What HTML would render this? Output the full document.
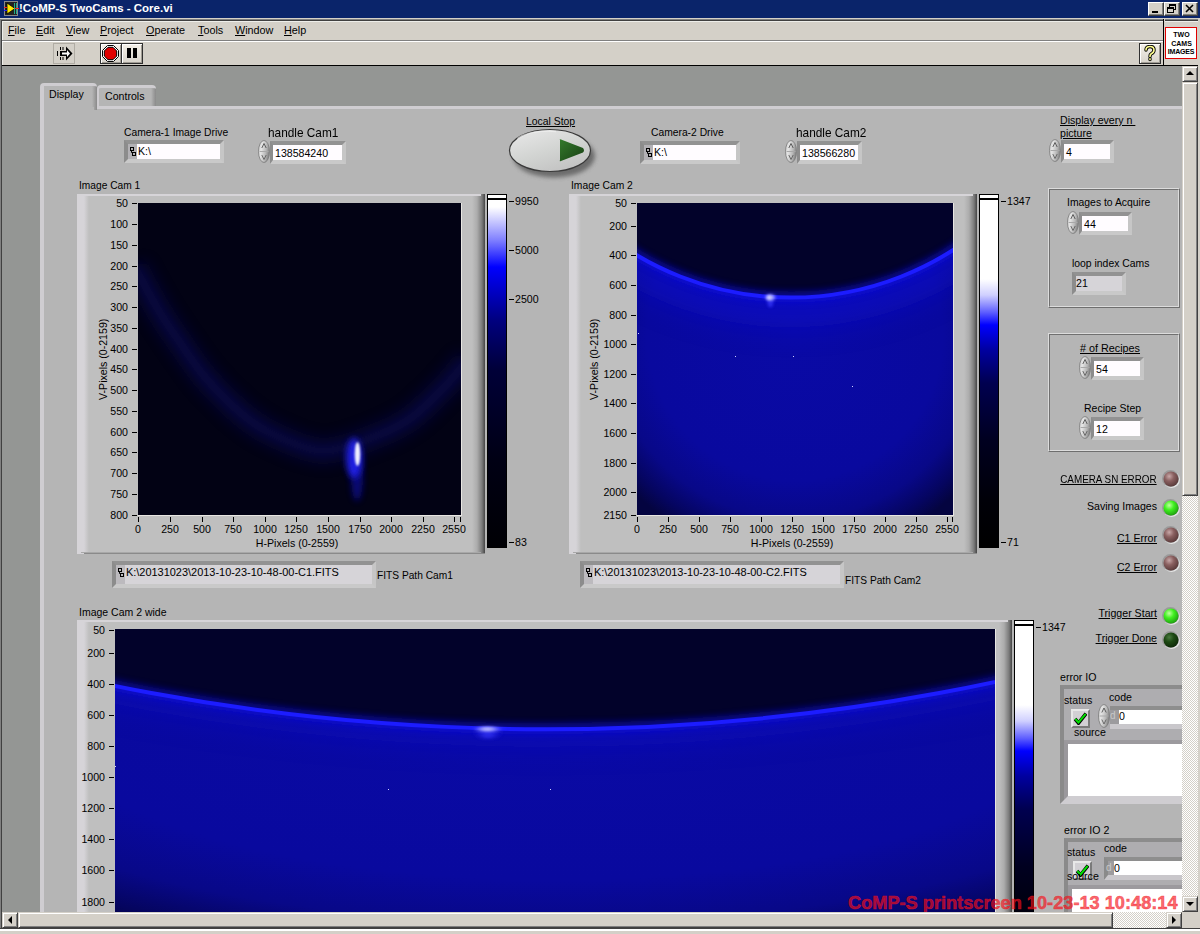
<!DOCTYPE html><html><head><meta charset="utf-8"><style>
*{box-sizing:border-box;margin:0;padding:0}
html,body{width:1200px;height:934px;overflow:hidden;background:#d4d0c8;font-family:"Liberation Sans",sans-serif;font-size:10.6px;color:#000}
.ab{position:absolute}
.t{position:absolute;white-space:pre;line-height:1;}
.u{text-decoration:underline;text-underline-offset:1px}

</style></head><body>
<div class="ab" style="left:0px;top:0px;width:1200px;height:18px;background:#0a246a"></div>
<svg class="ab" style="left:4px;top:1px" width="15" height="15" viewBox="0 0 15 15">
<rect x="0.5" y="0.5" width="13" height="14" fill="#222" stroke="#888"/>
<path d="M3 2 L3 13 L11 7.5 Z" fill="#ffe800" stroke="#000" stroke-width="0.8"/>
<rect x="10" y="2" width="1" height="11" fill="#2a8"/><rect x="12" y="2" width="1" height="11" fill="#2a8"/>
<rect x="0" y="6" width="3" height="1" fill="#e22"/><rect x="0" y="9" width="3" height="1" fill="#22e"/>
<rect x="11" y="7" width="4" height="1" fill="#e22"/>
</svg>
<div class="t" style="left:19px;top:3px;color:#fff;font-weight:bold;font-size:11.5px">!CoMP-S TwoCams - Core.vi</div>
<div class="ab" style="left:1148px;top:2px;width:16px;height:14px;background:#d4d0c8;border-top:1px solid #fff;border-left:1px solid #fff;border-right:1px solid #404040;border-bottom:1px solid #404040;box-shadow:inset -1px -1px 0 #808080"></div>
<div class="ab" style="left:1152px;top:11px;width:6px;height:2px;background:#000"></div>
<div class="ab" style="left:1164px;top:2px;width:16px;height:14px;background:#d4d0c8;border-top:1px solid #fff;border-left:1px solid #fff;border-right:1px solid #404040;border-bottom:1px solid #404040;box-shadow:inset -1px -1px 0 #808080"></div>
<svg class="ab" style="left:1167px;top:4px" width="10" height="10"><rect x="2.5" y="0.5" width="6" height="5" fill="none" stroke="#000"/><rect x="2" y="0" width="7" height="2" fill="#000"/><rect x="0.5" y="3.5" width="6" height="5" fill="#d4d0c8" stroke="#000"/><rect x="0" y="3" width="7" height="2" fill="#000"/></svg>
<div class="ab" style="left:1182px;top:2px;width:16px;height:14px;background:#d4d0c8;border-top:1px solid #fff;border-left:1px solid #fff;border-right:1px solid #404040;border-bottom:1px solid #404040;box-shadow:inset -1px -1px 0 #808080"></div>
<svg class="ab" style="left:1185px;top:4px" width="10" height="9"><path d="M1 1 L8 8 M8 1 L1 8" stroke="#000" stroke-width="1.6"/></svg>
<div class="ab" style="left:0px;top:18px;width:1200px;height:1px;background:#d4d0c8"></div>
<div class="ab" style="left:0px;top:19px;width:1200px;height:1px;background:#808080"></div>
<div class="ab" style="left:1px;top:20px;width:1199px;height:1px;background:#404040"></div>
<div class="ab" style="left:2px;top:21px;width:1198px;height:1px;background:#eeeeea"></div>
<div class="ab" style="left:0px;top:19px;width:1px;height:915px;background:#808080"></div>
<div class="ab" style="left:1px;top:20px;width:1px;height:914px;background:#404040"></div>
<div class="ab" style="left:2px;top:21px;width:1px;height:45px;background:#eeeeea"></div>
<div class="ab" style="left:1198px;top:18px;width:2px;height:916px;background:#d4d0c8"></div>
<div class="t" style="left:8px;top:25px;font-size:10.8px"><span style="text-decoration:underline;text-underline-offset:0.5px">F</span>ile</div>
<div class="t" style="left:36px;top:25px;font-size:10.8px"><span style="text-decoration:underline;text-underline-offset:0.5px">E</span>dit</div>
<div class="t" style="left:66px;top:25px;font-size:10.8px"><span style="text-decoration:underline;text-underline-offset:0.5px">V</span>iew</div>
<div class="t" style="left:100px;top:25px;font-size:10.8px"><span style="text-decoration:underline;text-underline-offset:0.5px">P</span>roject</div>
<div class="t" style="left:146px;top:25px;font-size:10.8px"><span style="text-decoration:underline;text-underline-offset:0.5px">O</span>perate</div>
<div class="t" style="left:198px;top:25px;font-size:10.8px"><span style="text-decoration:underline;text-underline-offset:0.5px">T</span>ools</div>
<div class="t" style="left:235px;top:25px;font-size:10.8px"><span style="text-decoration:underline;text-underline-offset:0.5px">W</span>indow</div>
<div class="t" style="left:284px;top:25px;font-size:10.8px"><span style="text-decoration:underline;text-underline-offset:0.5px">H</span>elp</div>
<div class="ab" style="left:2px;top:40px;width:1161px;height:1px;background:#808080"></div>
<div class="ab" style="left:2px;top:41px;width:1161px;height:1px;background:#fff"></div>
<div class="ab" style="left:53px;top:43px;width:22px;height:21px;border:1px solid #b0aca4"></div>
<svg class="ab" style="left:53px;top:43px" width="22" height="21" viewBox="0 0 22 21">
<path d="M4.5 8 V13 M7.5 4 V7 M7.5 14 V17 M10 4 V7 M10 14 V17" stroke="#000" stroke-width="1"/>
<path d="M7 8 H13 V3.5 L19.5 10.5 L13 17.5 V13 H7 Z" fill="#000"/>
<path d="M9 9.5 H14 V7 L17 10.5 L14 14 V11.5 H9 Z" fill="#fff"/>
</svg>
<div class="ab" style="left:100px;top:43px;width:22px;height:21px;background:linear-gradient(#f4f0e8,#d8d4cc);border:1px solid #303030;box-shadow:inset 1px 1px 0 #fff,inset -1px -1px 0 #a09c94"></div>
<div class="ab" style="left:121px;top:43px;width:22px;height:21px;background:linear-gradient(#f4f0e8,#d8d4cc);border:1px solid #303030;box-shadow:inset 1px 1px 0 #fff,inset -1px -1px 0 #a09c94"></div>
<svg class="ab" style="left:102px;top:45px" width="18" height="17" viewBox="0 0 18 17">
<path d="M5.5 0.5 h6 l5 5 v6 l-5 5 h-6 l-5 -5 v-6 z" fill="#fff" stroke="#000"/>
<path d="M6 2.3 h5 l3.7 3.7 v5 l-3.7 3.7 h-5 l-3.7 -3.7 v-5 z" fill="#e00000" stroke="#000" stroke-width="1"/>
</svg>
<div class="ab" style="left:127px;top:48px;width:4px;height:10px;background:#000"></div>
<div class="ab" style="left:133px;top:48px;width:4px;height:10px;background:#000"></div>
<div class="ab" style="left:1139px;top:43px;width:22px;height:21px;background:linear-gradient(#f4f0e8,#d8d4cc);border:1px solid #303030;box-shadow:inset 1px 1px 0 #fff,inset -1px -1px 0 #a09c94"></div>
<svg class="ab" style="left:1144px;top:45px" width="12" height="17" viewBox="0 0 12 17"><path d="M2 5 Q2 1.5 6 1.5 Q10 1.5 10 5 Q10 7.5 7 9 Q6 9.7 6 11.5 M6 13.8 V14.6" fill="none" stroke="#000" stroke-width="3.4" stroke-linecap="round"/><path d="M2 5 Q2 1.5 6 1.5 Q10 1.5 10 5 Q10 7.5 7 9 Q6 9.7 6 11.5 M6 13.8 V14.6" fill="none" stroke="#ffff90" stroke-width="1.6" stroke-linecap="round"/></svg>
<div class="ab" style="left:1163px;top:19px;width:1px;height:47px;background:#000"></div>
<div class="ab" style="left:1164px;top:19px;width:1px;height:47px;background:#d4d0c8"></div>
<div class="ab" style="left:1165px;top:27px;width:32px;height:32px;background:#fff;border:1px solid #e00000"></div>
<svg class="ab" style="left:1165px;top:27px" width="32" height="32"><g font-family="Liberation Sans" font-weight="bold" font-size="7" text-anchor="middle" fill="#000"><text x="16.5" y="10">TWO</text><text x="16.5" y="18.8">CAMS</text><text x="16" y="26.8" letter-spacing="-0.2">IMAGES</text></g></svg>
<div class="ab" style="left:2px;top:65px;width:1196px;height:1px;background:#000"></div>
<div class="ab" style="left:2px;top:66px;width:1180px;height:846px;background:#949694"></div>
<div class="ab" style="left:40px;top:106px;width:1142px;height:806px;background:#b5b5b5;border-top:3px solid #cfcdd1;border-left:4px solid #cfcdd1"></div>
<div class="ab" style="left:40px;top:83px;width:57px;height:27px;background:linear-gradient(90deg,#b5b5b5 calc(100% - 5px),#8a8a8a 100%);border-top:3px solid #cfcdd1;border-left:4px solid #cfcdd1;border-radius:4px 4px 0 0"></div>
<div class="ab" style="left:44px;top:107px;width:50px;height:4px;background:#b5b5b5"></div>
<div class="t" style="left:49px;top:89px;font-size:10.6px">Display</div>
<div class="ab" style="left:97px;top:85px;width:59px;height:21px;background:linear-gradient(90deg,#b5b5b5 calc(100% - 5px),#8a8a8a 100%);border-top:3px solid #cfcdd1;border-left:2px solid #cfcdd1;border-radius:4px 4px 0 0"></div>
<div class="t" style="left:105px;top:91px;font-size:10.6px">Controls</div>
<div class="t" style="left:79px;top:181px;font-size:10.2px">Image Cam 1</div>
<div class="ab" style="left:77px;top:194px;width:408px;height:360px;background:linear-gradient(90deg,#d6d4d8 0,#d6d4d8 7px,#bfbfbf 12px,#bfbfbf calc(100% - 13px),#acacac calc(100% - 8px),#7a7a7a calc(100% - 3px),#454545 100%)"></div>
<div class="ab" style="left:77px;top:194px;width:404px;height:2px;background:#d6d4d8"></div>
<div class="ab" style="left:84px;top:553px;width:401px;height:1px;background:#8a8a8a"></div>
<div class="ab" style="left:81px;top:552px;width:400px;height:1px;background:#a8a8a8"></div>
<div class="ab" style="left:132px;top:203px;width:5px;height:1px;background:#000"></div>
<div class="t" style="left:78px;top:198px;width:50px;text-align:right;font-size:10.6px">50</div>
<div class="ab" style="left:132px;top:224px;width:5px;height:1px;background:#000"></div>
<div class="t" style="left:78px;top:219px;width:50px;text-align:right;font-size:10.6px">100</div>
<div class="ab" style="left:132px;top:245px;width:5px;height:1px;background:#000"></div>
<div class="t" style="left:78px;top:240px;width:50px;text-align:right;font-size:10.6px">150</div>
<div class="ab" style="left:132px;top:266px;width:5px;height:1px;background:#000"></div>
<div class="t" style="left:78px;top:261px;width:50px;text-align:right;font-size:10.6px">200</div>
<div class="ab" style="left:132px;top:286px;width:5px;height:1px;background:#000"></div>
<div class="t" style="left:78px;top:281px;width:50px;text-align:right;font-size:10.6px">250</div>
<div class="ab" style="left:132px;top:307px;width:5px;height:1px;background:#000"></div>
<div class="t" style="left:78px;top:302px;width:50px;text-align:right;font-size:10.6px">300</div>
<div class="ab" style="left:132px;top:328px;width:5px;height:1px;background:#000"></div>
<div class="t" style="left:78px;top:323px;width:50px;text-align:right;font-size:10.6px">350</div>
<div class="ab" style="left:132px;top:349px;width:5px;height:1px;background:#000"></div>
<div class="t" style="left:78px;top:344px;width:50px;text-align:right;font-size:10.6px">400</div>
<div class="ab" style="left:132px;top:369px;width:5px;height:1px;background:#000"></div>
<div class="t" style="left:78px;top:364px;width:50px;text-align:right;font-size:10.6px">450</div>
<div class="ab" style="left:132px;top:390px;width:5px;height:1px;background:#000"></div>
<div class="t" style="left:78px;top:385px;width:50px;text-align:right;font-size:10.6px">500</div>
<div class="ab" style="left:132px;top:411px;width:5px;height:1px;background:#000"></div>
<div class="t" style="left:78px;top:406px;width:50px;text-align:right;font-size:10.6px">550</div>
<div class="ab" style="left:132px;top:432px;width:5px;height:1px;background:#000"></div>
<div class="t" style="left:78px;top:427px;width:50px;text-align:right;font-size:10.6px">600</div>
<div class="ab" style="left:132px;top:452px;width:5px;height:1px;background:#000"></div>
<div class="t" style="left:78px;top:447px;width:50px;text-align:right;font-size:10.6px">650</div>
<div class="ab" style="left:132px;top:473px;width:5px;height:1px;background:#000"></div>
<div class="t" style="left:78px;top:468px;width:50px;text-align:right;font-size:10.6px">700</div>
<div class="ab" style="left:132px;top:494px;width:5px;height:1px;background:#000"></div>
<div class="t" style="left:78px;top:489px;width:50px;text-align:right;font-size:10.6px">750</div>
<div class="ab" style="left:132px;top:515px;width:5px;height:1px;background:#000"></div>
<div class="t" style="left:78px;top:510px;width:50px;text-align:right;font-size:10.6px">800</div>
<div class="ab" style="left:138px;top:517px;width:1px;height:5px;background:#000"></div>
<div class="t" style="left:113px;top:524px;width:50px;text-align:center;font-size:10.6px">0</div>
<div class="ab" style="left:170px;top:517px;width:1px;height:5px;background:#000"></div>
<div class="t" style="left:145px;top:524px;width:50px;text-align:center;font-size:10.6px">250</div>
<div class="ab" style="left:202px;top:517px;width:1px;height:5px;background:#000"></div>
<div class="t" style="left:177px;top:524px;width:50px;text-align:center;font-size:10.6px">500</div>
<div class="ab" style="left:233px;top:517px;width:1px;height:5px;background:#000"></div>
<div class="t" style="left:208px;top:524px;width:50px;text-align:center;font-size:10.6px">750</div>
<div class="ab" style="left:265px;top:517px;width:1px;height:5px;background:#000"></div>
<div class="t" style="left:240px;top:524px;width:50px;text-align:center;font-size:10.6px">1000</div>
<div class="ab" style="left:296px;top:517px;width:1px;height:5px;background:#000"></div>
<div class="t" style="left:271px;top:524px;width:50px;text-align:center;font-size:10.6px">1250</div>
<div class="ab" style="left:328px;top:517px;width:1px;height:5px;background:#000"></div>
<div class="t" style="left:303px;top:524px;width:50px;text-align:center;font-size:10.6px">1500</div>
<div class="ab" style="left:360px;top:517px;width:1px;height:5px;background:#000"></div>
<div class="t" style="left:335px;top:524px;width:50px;text-align:center;font-size:10.6px">1750</div>
<div class="ab" style="left:391px;top:517px;width:1px;height:5px;background:#000"></div>
<div class="t" style="left:366px;top:524px;width:50px;text-align:center;font-size:10.6px">2000</div>
<div class="ab" style="left:423px;top:517px;width:1px;height:5px;background:#000"></div>
<div class="t" style="left:398px;top:524px;width:50px;text-align:center;font-size:10.6px">2250</div>
<div class="ab" style="left:454px;top:517px;width:1px;height:5px;background:#000"></div>
<div class="t" style="left:429px;top:524px;width:50px;text-align:center;font-size:10.6px">2550</div>
<div class="ab" style="left:460px;top:517px;width:1px;height:5px;background:#000"></div>
<div class="t" style="left:245px;top:538px;width:104px;text-align:center;font-size:10.6px">H-Pixels (0-2559)</div>
<div class="t" style="left:62px;top:354px;width:82px;text-align:center;font-size:10.6px;transform:rotate(-90deg)">V-Pixels (0-2159)</div>
<div class="ab" style="left:487px;top:194px;width:20px;height:354px;background:#000"></div>
<div class="ab" style="left:488px;top:195px;width:18px;height:3px;background:#fff"></div>
<div class="ab" style="left:488px;top:200px;width:18px;height:347px;background:linear-gradient(180deg,#fff 0,#fff 7px,#8080ff 40px,#0000ff 67px,#000080 120px,#000038 170px,#000014 260px,#000004 100%)"></div>
<div class="ab" style="left:509px;top:201px;width:5px;height:1px;background:#000"></div>
<div class="t" style="left:515px;top:196px;font-size:10.6px">9950</div>
<div class="ab" style="left:509px;top:250px;width:5px;height:1px;background:#000"></div>
<div class="t" style="left:515px;top:245px;font-size:10.6px">5000</div>
<div class="ab" style="left:509px;top:299px;width:5px;height:1px;background:#000"></div>
<div class="t" style="left:515px;top:294px;font-size:10.6px">2500</div>
<div class="ab" style="left:509px;top:542px;width:5px;height:1px;background:#000"></div>
<div class="t" style="left:515px;top:537px;font-size:10.6px">83</div>
<svg class="ab" style="left:138px;top:203px" width="323" height="312" viewBox="0 0 323 312">
<defs><filter id="b1" x="-50%" y="-50%" width="200%" height="200%"><feGaussianBlur stdDeviation="7"/></filter>
<filter id="b1b" x="-50%" y="-50%" width="200%" height="200%"><feGaussianBlur stdDeviation="4"/></filter>
<filter id="b2" x="-50%" y="-50%" width="200%" height="200%"><feGaussianBlur stdDeviation="3"/></filter>
<filter id="b3" x="-50%" y="-50%" width="200%" height="200%"><feGaussianBlur stdDeviation="1.2"/></filter></defs>
<rect width="323" height="312" fill="#020214"/>
<path d="M-3.0 62.0 C-2.5 63.3 -4.1 62.2 0.0 70.0 C4.1 77.8 14.3 96.9 21.4 108.7 C28.5 120.5 35.7 130.5 42.8 140.8 C49.9 151.2 57.1 161.9 64.2 170.8 C71.4 179.7 78.6 187.2 85.7 194.3 C92.8 201.4 99.9 208.0 107.0 213.6 C114.1 219.2 118.5 222.9 128.5 228.0 C138.5 233.1 155.7 241.2 166.8 244.4 C177.9 247.6 182.5 249.2 195.0 247.0 C207.5 244.8 228.7 236.9 241.8 231.5 C255.0 226.1 263.2 222.2 273.9 214.4 C284.6 206.6 297.8 192.6 306.0 184.4 C314.2 176.2 319.0 169.7 323.0 165.0 C327.0 160.3 328.8 157.5 330.0 156.0" fill="none" stroke="#0a0a68" stroke-width="26" opacity="0.36" filter="url(#b1)"/>
<path d="M-3.0 62.0 C-2.5 63.3 -4.1 62.2 0.0 70.0 C4.1 77.8 14.3 96.9 21.4 108.7 C28.5 120.5 35.7 130.5 42.8 140.8 C49.9 151.2 57.1 161.9 64.2 170.8 C71.4 179.7 78.6 187.2 85.7 194.3 C92.8 201.4 99.9 208.0 107.0 213.6 C114.1 219.2 118.5 222.9 128.5 228.0 C138.5 233.1 155.7 241.2 166.8 244.4 C177.9 247.6 182.5 249.2 195.0 247.0 C207.5 244.8 228.7 236.9 241.8 231.5 C255.0 226.1 263.2 222.2 273.9 214.4 C284.6 206.6 297.8 192.6 306.0 184.4 C314.2 176.2 319.0 169.7 323.0 165.0 C327.0 160.3 328.8 157.5 330.0 156.0" fill="none" stroke="#10106a" stroke-width="7" opacity="0.3" filter="url(#b1b)"/>
<ellipse cx="219" cy="272" rx="6" ry="26" fill="#0c0ca0" opacity="0.7" filter="url(#b2)"/>
<ellipse cx="216" cy="255" rx="8" ry="20" fill="#2222f0" opacity="0.9" filter="url(#b2)"/>
<ellipse cx="219.5" cy="251" rx="2.8" ry="12" fill="#f0f0ff" filter="url(#b3)"/>
</svg>
<div class="ab" style="left:461px;top:203px;width:1px;height:313px;background:#e8e6e2"></div>
<div class="ab" style="left:138px;top:515px;width:324px;height:1px;background:#e8e6e2"></div>
<div class="t" style="left:571px;top:181px;font-size:10.3px">Image Cam 2</div>
<div class="ab" style="left:569px;top:194px;width:408px;height:360px;background:linear-gradient(90deg,#d6d4d8 0,#d6d4d8 7px,#bfbfbf 12px,#bfbfbf calc(100% - 13px),#acacac calc(100% - 8px),#7a7a7a calc(100% - 3px),#454545 100%)"></div>
<div class="ab" style="left:569px;top:194px;width:404px;height:2px;background:#d6d4d8"></div>
<div class="ab" style="left:576px;top:553px;width:401px;height:1px;background:#8a8a8a"></div>
<div class="ab" style="left:573px;top:552px;width:400px;height:1px;background:#a8a8a8"></div>
<div class="ab" style="left:631px;top:203px;width:5px;height:1px;background:#000"></div>
<div class="t" style="left:577px;top:198px;width:50px;text-align:right;font-size:10.6px">50</div>
<div class="ab" style="left:631px;top:226px;width:5px;height:1px;background:#000"></div>
<div class="t" style="left:577px;top:221px;width:50px;text-align:right;font-size:10.6px">200</div>
<div class="ab" style="left:631px;top:255px;width:5px;height:1px;background:#000"></div>
<div class="t" style="left:577px;top:250px;width:50px;text-align:right;font-size:10.6px">400</div>
<div class="ab" style="left:631px;top:285px;width:5px;height:1px;background:#000"></div>
<div class="t" style="left:577px;top:280px;width:50px;text-align:right;font-size:10.6px">600</div>
<div class="ab" style="left:631px;top:315px;width:5px;height:1px;background:#000"></div>
<div class="t" style="left:577px;top:310px;width:50px;text-align:right;font-size:10.6px">800</div>
<div class="ab" style="left:631px;top:344px;width:5px;height:1px;background:#000"></div>
<div class="t" style="left:577px;top:339px;width:50px;text-align:right;font-size:10.6px">1000</div>
<div class="ab" style="left:631px;top:374px;width:5px;height:1px;background:#000"></div>
<div class="t" style="left:577px;top:369px;width:50px;text-align:right;font-size:10.6px">1200</div>
<div class="ab" style="left:631px;top:403px;width:5px;height:1px;background:#000"></div>
<div class="t" style="left:577px;top:398px;width:50px;text-align:right;font-size:10.6px">1400</div>
<div class="ab" style="left:631px;top:433px;width:5px;height:1px;background:#000"></div>
<div class="t" style="left:577px;top:428px;width:50px;text-align:right;font-size:10.6px">1600</div>
<div class="ab" style="left:631px;top:463px;width:5px;height:1px;background:#000"></div>
<div class="t" style="left:577px;top:458px;width:50px;text-align:right;font-size:10.6px">1800</div>
<div class="ab" style="left:631px;top:492px;width:5px;height:1px;background:#000"></div>
<div class="t" style="left:577px;top:487px;width:50px;text-align:right;font-size:10.6px">2000</div>
<div class="ab" style="left:631px;top:515px;width:5px;height:1px;background:#000"></div>
<div class="t" style="left:577px;top:510px;width:50px;text-align:right;font-size:10.6px">2150</div>
<div class="ab" style="left:637px;top:517px;width:1px;height:5px;background:#000"></div>
<div class="t" style="left:612px;top:524px;width:50px;text-align:center;font-size:10.6px">0</div>
<div class="ab" style="left:668px;top:517px;width:1px;height:5px;background:#000"></div>
<div class="t" style="left:643px;top:524px;width:50px;text-align:center;font-size:10.6px">250</div>
<div class="ab" style="left:699px;top:517px;width:1px;height:5px;background:#000"></div>
<div class="t" style="left:674px;top:524px;width:50px;text-align:center;font-size:10.6px">500</div>
<div class="ab" style="left:730px;top:517px;width:1px;height:5px;background:#000"></div>
<div class="t" style="left:705px;top:524px;width:50px;text-align:center;font-size:10.6px">750</div>
<div class="ab" style="left:761px;top:517px;width:1px;height:5px;background:#000"></div>
<div class="t" style="left:736px;top:524px;width:50px;text-align:center;font-size:10.6px">1000</div>
<div class="ab" style="left:792px;top:517px;width:1px;height:5px;background:#000"></div>
<div class="t" style="left:767px;top:524px;width:50px;text-align:center;font-size:10.6px">1250</div>
<div class="ab" style="left:823px;top:517px;width:1px;height:5px;background:#000"></div>
<div class="t" style="left:798px;top:524px;width:50px;text-align:center;font-size:10.6px">1500</div>
<div class="ab" style="left:854px;top:517px;width:1px;height:5px;background:#000"></div>
<div class="t" style="left:829px;top:524px;width:50px;text-align:center;font-size:10.6px">1750</div>
<div class="ab" style="left:885px;top:517px;width:1px;height:5px;background:#000"></div>
<div class="t" style="left:860px;top:524px;width:50px;text-align:center;font-size:10.6px">2000</div>
<div class="ab" style="left:916px;top:517px;width:1px;height:5px;background:#000"></div>
<div class="t" style="left:891px;top:524px;width:50px;text-align:center;font-size:10.6px">2250</div>
<div class="ab" style="left:947px;top:517px;width:1px;height:5px;background:#000"></div>
<div class="t" style="left:922px;top:524px;width:50px;text-align:center;font-size:10.6px">2550</div>
<div class="ab" style="left:952px;top:517px;width:1px;height:5px;background:#000"></div>
<div class="t" style="left:740px;top:538px;width:104px;text-align:center;font-size:10.6px">H-Pixels (0-2559)</div>
<div class="t" style="left:553px;top:354px;width:82px;text-align:center;font-size:10.6px;transform:rotate(-90deg)">V-Pixels (0-2159)</div>
<div class="ab" style="left:979px;top:194px;width:20px;height:354px;background:#000"></div>
<div class="ab" style="left:980px;top:195px;width:18px;height:3px;background:#fff"></div>
<div class="ab" style="left:980px;top:200px;width:18px;height:347px;background:linear-gradient(180deg,#fff 0,#fff 79px,#d0d0ff 95px,#6060ff 112px,#0000ff 125px,#0000a0 150px,#000050 183px,#000020 240px,#000008 300px,#000000 100%)"></div>
<div class="ab" style="left:1001px;top:201px;width:5px;height:1px;background:#000"></div>
<div class="t" style="left:1007px;top:196px;font-size:10.6px">1347</div>
<div class="ab" style="left:1001px;top:542px;width:5px;height:1px;background:#000"></div>
<div class="t" style="left:1007px;top:537px;font-size:10.6px">71</div>
<svg class="ab" style="left:637px;top:203px" width="316" height="312" viewBox="0 0 316 312">
<defs>
<radialGradient id="vgp2" cx="0.5" cy="0.42" r="0.72">
<stop offset="0" stop-color="#0a0aa6"/><stop offset="0.65" stop-color="#09099e"/><stop offset="0.82" stop-color="#080888"/><stop offset="0.93" stop-color="#050560"/><stop offset="1" stop-color="#040440"/></radialGradient>
<clipPath id="cbp2"><path d="M0 0 H316 V312 H0 Z M-146.3 -206 A300.1 300.1 0 1 0 453.90000000000003 -206 A300.1 300.1 0 1 0 -146.3 -206 Z" clip-rule="evenodd"/></clipPath>
<filter id="gp2" x="-20%" y="-20%" width="140%" height="140%"><feGaussianBlur stdDeviation="3.0 3"/></filter>
<filter id="g2p2" x="-20%" y="-50%" width="140%" height="200%"><feGaussianBlur stdDeviation="14.0 14"/></filter>
<filter id="sp2" x="-100%" y="-100%" width="300%" height="300%"><feGaussianBlur stdDeviation="1.6 1.6"/></filter>
</defs>
<rect width="316" height="312" fill="#02022a"/>
<g clip-path="url(#cbp2)"><rect width="316" height="312" fill="url(#vgp2)"/>
<circle cx="153.8" cy="-206" r="300.1" fill="none" stroke="#0e0ed4" stroke-width="60" opacity="0.5" filter="url(#g2p2)"/></g>
<circle cx="153.8" cy="-206" r="300.1" fill="none" stroke="#0c0ce0" stroke-width="11" opacity="0.55" filter="url(#gp2)"/>
<circle cx="153.8" cy="-206" r="300.6" fill="none" stroke="#1c1cff" stroke-width="4"/>
<ellipse cx="133.4" cy="98.4" rx="3.0" ry="6" fill="#3a3aff" opacity="0.7" filter="url(#sp2)"/>
<ellipse cx="133.4" cy="94.4" rx="5.0" ry="3.0" fill="#9090ff" filter="url(#sp2)"/>
<ellipse cx="132.4" cy="94.4" rx="2.5" ry="2.0" fill="#e0e0ff" filter="url(#sp2)"/>
<rect x="98" y="153" width="1" height="1" fill="#d0d0ff"/><rect x="156" y="153" width="1" height="1" fill="#d0d0ff"/><rect x="215" y="183" width="1" height="1" fill="#d0d0ff"/><rect x="1" y="130" width="1" height="1" fill="#d0d0ff"/></svg>
<div class="ab" style="left:953px;top:203px;width:1px;height:313px;background:#e8e6e2"></div>
<div class="ab" style="left:637px;top:515px;width:317px;height:1px;background:#e8e6e2"></div>
<div class="t" style="left:79px;top:607px;font-size:10.5px">Image Cam 2 wide</div>
<div class="ab" style="left:77px;top:620px;width:935px;height:381px;background:linear-gradient(90deg,#d6d4d8 0,#d6d4d8 7px,#bfbfbf 12px,#bfbfbf calc(100% - 13px),#acacac calc(100% - 8px),#7a7a7a calc(100% - 3px),#454545 100%)"></div>
<div class="ab" style="left:77px;top:620px;width:931px;height:2px;background:#d6d4d8"></div>
<div class="ab" style="left:84px;top:1000px;width:928px;height:1px;background:#8a8a8a"></div>
<div class="ab" style="left:81px;top:999px;width:927px;height:1px;background:#a8a8a8"></div>
<div class="ab" style="left:109px;top:630px;width:5px;height:1px;background:#000"></div>
<div class="t" style="left:55px;top:625px;width:50px;text-align:right;font-size:10.6px">50</div>
<div class="ab" style="left:109px;top:653px;width:5px;height:1px;background:#000"></div>
<div class="t" style="left:55px;top:648px;width:50px;text-align:right;font-size:10.6px">200</div>
<div class="ab" style="left:109px;top:684px;width:5px;height:1px;background:#000"></div>
<div class="t" style="left:55px;top:679px;width:50px;text-align:right;font-size:10.6px">400</div>
<div class="ab" style="left:109px;top:715px;width:5px;height:1px;background:#000"></div>
<div class="t" style="left:55px;top:710px;width:50px;text-align:right;font-size:10.6px">600</div>
<div class="ab" style="left:109px;top:746px;width:5px;height:1px;background:#000"></div>
<div class="t" style="left:55px;top:741px;width:50px;text-align:right;font-size:10.6px">800</div>
<div class="ab" style="left:109px;top:777px;width:5px;height:1px;background:#000"></div>
<div class="t" style="left:55px;top:772px;width:50px;text-align:right;font-size:10.6px">1000</div>
<div class="ab" style="left:109px;top:808px;width:5px;height:1px;background:#000"></div>
<div class="t" style="left:55px;top:803px;width:50px;text-align:right;font-size:10.6px">1200</div>
<div class="ab" style="left:109px;top:839px;width:5px;height:1px;background:#000"></div>
<div class="t" style="left:55px;top:834px;width:50px;text-align:right;font-size:10.6px">1400</div>
<div class="ab" style="left:109px;top:870px;width:5px;height:1px;background:#000"></div>
<div class="t" style="left:55px;top:865px;width:50px;text-align:right;font-size:10.6px">1600</div>
<div class="ab" style="left:109px;top:902px;width:5px;height:1px;background:#000"></div>
<div class="t" style="left:55px;top:897px;width:50px;text-align:right;font-size:10.6px">1800</div>
<div class="ab" style="left:1014px;top:620px;width:20px;height:381px;background:#000"></div>
<div class="ab" style="left:1015px;top:621px;width:18px;height:3px;background:#fff"></div>
<div class="ab" style="left:1015px;top:626px;width:18px;height:374px;background:linear-gradient(180deg,#fff 0,#fff 79px,#d0d0ff 95px,#6060ff 112px,#0000ff 125px,#0000a0 150px,#000050 183px,#000020 240px,#000008 300px,#000000 100%)"></div>
<div class="ab" style="left:1036px;top:627px;width:5px;height:1px;background:#000"></div>
<div class="t" style="left:1042px;top:622px;font-size:10.6px">1347</div>
<svg class="ab" style="left:115px;top:629px" width="880" height="283" viewBox="0 0 880 283">
<defs>
<radialGradient id="vgw" cx="0.5" cy="0.3" r="0.9">
<stop offset="0" stop-color="#0a0aa6"/><stop offset="0.65" stop-color="#09099e"/><stop offset="0.82" stop-color="#080888"/><stop offset="0.93" stop-color="#050560"/><stop offset="1" stop-color="#040440"/></radialGradient>
<clipPath id="cbw"><path d="M0 0 H880 V283 H0 Z M-1734.7 -2065.3 A2165 2165 0 1 0 2595.3 -2065.3 A2165 2165 0 1 0 -1734.7 -2065.3 Z" clip-rule="evenodd"/></clipPath>
<filter id="gw" x="-20%" y="-20%" width="140%" height="140%"><feGaussianBlur stdDeviation="8.100000000000001 3"/></filter>
<filter id="g2w" x="-20%" y="-50%" width="140%" height="200%"><feGaussianBlur stdDeviation="37.800000000000004 14"/></filter>
<filter id="sw" x="-100%" y="-100%" width="300%" height="300%"><feGaussianBlur stdDeviation="4.32 1.6"/></filter>
</defs>
<rect width="880" height="283" fill="#02022a"/>
<g clip-path="url(#cbw)"><rect width="880" height="283" fill="url(#vgw)"/>
<circle cx="430.3" cy="-2065.3" r="2165" fill="none" stroke="#0e0ed4" stroke-width="36" opacity="0.4" filter="url(#g2w)"/></g>
<circle cx="430.3" cy="-2065.3" r="2165" fill="none" stroke="#0c0ce0" stroke-width="11" opacity="0.55" filter="url(#gw)"/>
<circle cx="430.3" cy="-2065.3" r="2165.5" fill="none" stroke="#1c1cff" stroke-width="4"/>
<ellipse cx="373" cy="104" rx="8.100000000000001" ry="6" fill="#3a3aff" opacity="0.7" filter="url(#sw)"/>
<ellipse cx="373" cy="100" rx="10.125" ry="2.25" fill="#9090ff" filter="url(#sw)"/>
<ellipse cx="372" cy="100" rx="5.0625" ry="1.5" fill="#e0e0ff" filter="url(#sw)"/>
<rect x="273" y="160" width="1" height="1" fill="#d0d0ff"/><rect x="435" y="160" width="1" height="1" fill="#d0d0ff"/><rect x="0" y="137" width="1" height="1" fill="#d0d0ff"/></svg>
<div class="ab" style="left:995px;top:629px;width:1px;height:300px;background:#e8e6e2"></div>
<div class="t" style="left:124px;top:128px;font-size:10.3px">Camera-1 Image Drive</div>
<div class="ab" style="left:124px;top:140px;width:100px;height:23px;background:#b3b1b5;border-style:solid;border-width:4px 4px 4px 4px;border-color:#929292 #c6c6c6 #c9c9c9 #8c8c8c"></div>
<div class="ab" style="left:137px;top:144px;width:83px;height:15px;background:#fffcff"></div>
<div class="ab" style="left:129px;top:146px"><svg width="8" height="11" viewBox="0 0 8 11"><rect x="1.5" y="1.5" width="3" height="3" fill="none" stroke="#000" stroke-width="1"/><rect x="3.5" y="6.5" width="3" height="3" fill="none" stroke="#000" stroke-width="1"/><path d="M2.5 4.5 V6.5 H3.5" stroke="#000" stroke-width="1" fill="none"/></svg></div>
<div class="t" style="left:138px;top:146px;font-size:10.6px">K:\</div>
<div class="t" style="left:268px;top:125.5px;font-size:13.3px;transform:scaleX(0.89);transform-origin:0 0">handle Cam1</div>
<svg class="ab" style="left:258px;top:140px" width="12" height="23" viewBox="0 0 12 23">
<defs><linearGradient id="sp258_140" x1="0" y1="0" x2="1" y2="0.3"><stop offset="0" stop-color="#d0d0d0"/><stop offset="0.35" stop-color="#e4e4e4"/><stop offset="0.75" stop-color="#b8b8b8"/><stop offset="1" stop-color="#8a8a8a"/></linearGradient></defs>
<ellipse cx="6.0" cy="11.5" rx="5.5" ry="11.0" fill="url(#sp258_140)" stroke="#7a7a7a" stroke-width="0.8"/>
<path d="M1.5 11.5 H10.5" stroke="#a8a8a8"/>
<path d="M3.8 8.0 L6.0 3.5 L8.2 8.0" fill="none" stroke="#505050" stroke-width="0.9"/>
<path d="M3.8 15.0 L6.0 19.5 L8.2 15.0" fill="none" stroke="#606060" stroke-width="0.9"/>
</svg>
<div class="ab" style="left:270px;top:141px;width:76px;height:23px;background:#fffcff;border-style:solid;border-width:4px 4px 4px 3px;border-color:#929292 #c6c6c6 #c9c9c9 #8c8c8c"></div>
<div class="t" style="left:275px;top:148px;font-size:10.6px">138584240</div>
<div class="t" style="left:651px;top:128px;font-size:10.3px">Camera-2 Drive</div>
<div class="ab" style="left:640px;top:141px;width:100px;height:23px;background:#b3b1b5;border-style:solid;border-width:4px 4px 4px 4px;border-color:#929292 #c6c6c6 #c9c9c9 #8c8c8c"></div>
<div class="ab" style="left:653px;top:145px;width:83px;height:15px;background:#fffcff"></div>
<div class="ab" style="left:645px;top:147px"><svg width="8" height="11" viewBox="0 0 8 11"><rect x="1.5" y="1.5" width="3" height="3" fill="none" stroke="#000" stroke-width="1"/><rect x="3.5" y="6.5" width="3" height="3" fill="none" stroke="#000" stroke-width="1"/><path d="M2.5 4.5 V6.5 H3.5" stroke="#000" stroke-width="1" fill="none"/></svg></div>
<div class="t" style="left:654px;top:147px;font-size:10.6px">K:\</div>
<div class="t" style="left:796px;top:125.5px;font-size:13.3px;transform:scaleX(0.89);transform-origin:0 0">handle Cam2</div>
<svg class="ab" style="left:785px;top:140px" width="12" height="23" viewBox="0 0 12 23">
<defs><linearGradient id="sp785_140" x1="0" y1="0" x2="1" y2="0.3"><stop offset="0" stop-color="#d0d0d0"/><stop offset="0.35" stop-color="#e4e4e4"/><stop offset="0.75" stop-color="#b8b8b8"/><stop offset="1" stop-color="#8a8a8a"/></linearGradient></defs>
<ellipse cx="6.0" cy="11.5" rx="5.5" ry="11.0" fill="url(#sp785_140)" stroke="#7a7a7a" stroke-width="0.8"/>
<path d="M1.5 11.5 H10.5" stroke="#a8a8a8"/>
<path d="M3.8 8.0 L6.0 3.5 L8.2 8.0" fill="none" stroke="#505050" stroke-width="0.9"/>
<path d="M3.8 15.0 L6.0 19.5 L8.2 15.0" fill="none" stroke="#606060" stroke-width="0.9"/>
</svg>
<div class="ab" style="left:797px;top:141px;width:65px;height:23px;background:#fffcff;border-style:solid;border-width:4px 4px 4px 3px;border-color:#929292 #c6c6c6 #c9c9c9 #8c8c8c"></div>
<div class="t" style="left:802px;top:148px;font-size:10.6px">138566280</div>
<div class="t" style="left:1060px;top:115px;font-size:10.6px"><span class="u">Display every n </span></div>
<div class="t" style="left:1060px;top:128px;font-size:10.6px"><span class="u">picture</span></div>
<svg class="ab" style="left:1049px;top:139px" width="12" height="23" viewBox="0 0 12 23">
<defs><linearGradient id="sp1049_139" x1="0" y1="0" x2="1" y2="0.3"><stop offset="0" stop-color="#d0d0d0"/><stop offset="0.35" stop-color="#e4e4e4"/><stop offset="0.75" stop-color="#b8b8b8"/><stop offset="1" stop-color="#8a8a8a"/></linearGradient></defs>
<ellipse cx="6.0" cy="11.5" rx="5.5" ry="11.0" fill="url(#sp1049_139)" stroke="#7a7a7a" stroke-width="0.8"/>
<path d="M1.5 11.5 H10.5" stroke="#a8a8a8"/>
<path d="M3.8 8.0 L6.0 3.5 L8.2 8.0" fill="none" stroke="#505050" stroke-width="0.9"/>
<path d="M3.8 15.0 L6.0 19.5 L8.2 15.0" fill="none" stroke="#606060" stroke-width="0.9"/>
</svg>
<div class="ab" style="left:1061px;top:140px;width:53px;height:23px;background:#fffcff;border-style:solid;border-width:4px 4px 4px 3px;border-color:#929292 #c6c6c6 #c9c9c9 #8c8c8c"></div>
<div class="t" style="left:1066px;top:147px;font-size:10.6px">4</div>
<div class="t" style="left:526px;top:117px;font-size:10.4px"><span class="u">Local Stop</span></div>
<svg class="ab" style="left:504px;top:126px" width="96" height="56" viewBox="0 0 96 56">
<defs>
<filter id="lsb" x="-30%" y="-30%" width="160%" height="160%"><feGaussianBlur stdDeviation="2.2"/></filter>
<linearGradient id="lsg" x1="0.2" y1="0" x2="0.8" y2="1"><stop offset="0" stop-color="#e6e6e6"/><stop offset="0.5" stop-color="#d2d4d2"/><stop offset="1" stop-color="#c0c0c0"/></linearGradient>
<linearGradient id="tri" x1="0" y1="0" x2="1" y2="1"><stop offset="0" stop-color="#347a2c"/><stop offset="1" stop-color="#184014"/></linearGradient>
</defs>
<ellipse cx="50" cy="30" rx="41" ry="21.5" fill="#5a5a5a" opacity="0.8" filter="url(#lsb)"/>
<ellipse cx="46" cy="24.5" rx="40.5" ry="21" fill="url(#lsg)" stroke="#3a3a3a" stroke-width="1.2"/><ellipse cx="44" cy="21" rx="36" ry="16" fill="none" stroke="#f4f4f4" stroke-width="1.5" opacity="0.6" stroke-dasharray="40 200" stroke-dashoffset="-95"/>
<path d="M56 14 Q55 13 57 13.5 L79 22 Q81 24.5 79 26.5 L57 35 Q55 36 56 34 Z" fill="url(#tri)"/>
</svg>
<div class="ab" style="left:1048px;top:188px;width:132px;height:120px;border:1px solid #dcdcdc;border-right-color:#6e6e6e;border-bottom-color:#6e6e6e"></div>
<div class="ab" style="left:1049px;top:189px;width:130px;height:118px;border:1px solid #707070;border-right-color:#dcdcdc;border-bottom-color:#dcdcdc"></div>
<div class="t" style="left:1067px;top:198px;font-size:10.4px">Images to Acquire</div>
<svg class="ab" style="left:1067px;top:211px" width="12" height="23" viewBox="0 0 12 23">
<defs><linearGradient id="sp1067_211" x1="0" y1="0" x2="1" y2="0.3"><stop offset="0" stop-color="#d0d0d0"/><stop offset="0.35" stop-color="#e4e4e4"/><stop offset="0.75" stop-color="#b8b8b8"/><stop offset="1" stop-color="#8a8a8a"/></linearGradient></defs>
<ellipse cx="6.0" cy="11.5" rx="5.5" ry="11.0" fill="url(#sp1067_211)" stroke="#7a7a7a" stroke-width="0.8"/>
<path d="M1.5 11.5 H10.5" stroke="#a8a8a8"/>
<path d="M3.8 8.0 L6.0 3.5 L8.2 8.0" fill="none" stroke="#505050" stroke-width="0.9"/>
<path d="M3.8 15.0 L6.0 19.5 L8.2 15.0" fill="none" stroke="#606060" stroke-width="0.9"/>
</svg>
<div class="ab" style="left:1079px;top:212px;width:53px;height:23px;background:#fffcff;border-style:solid;border-width:4px 4px 4px 3px;border-color:#929292 #c6c6c6 #c9c9c9 #8c8c8c"></div>
<div class="t" style="left:1084px;top:219px;font-size:10.6px">44</div>
<div class="t" style="left:1072px;top:259px;font-size:10.4px">loop index Cams</div>
<div class="ab" style="left:1072px;top:272px;width:54px;height:23px;background:#d6d4d8;border-style:solid;border-width:4px 4px 4px 4px;border-color:#929292 #c6c6c6 #c9c9c9 #8c8c8c"></div>
<div class="t" style="left:1076px;top:278px;font-size:10.6px">21</div>
<div class="ab" style="left:1048px;top:333px;width:132px;height:119px;border:1px solid #dcdcdc;border-right-color:#6e6e6e;border-bottom-color:#6e6e6e"></div>
<div class="ab" style="left:1049px;top:334px;width:130px;height:117px;border:1px solid #707070;border-right-color:#dcdcdc;border-bottom-color:#dcdcdc"></div>
<div class="t" style="left:1080px;top:343px;font-size:10.8px"><span class="u"># of Recipes</span></div>
<svg class="ab" style="left:1079px;top:356px" width="12" height="23" viewBox="0 0 12 23">
<defs><linearGradient id="sp1079_356" x1="0" y1="0" x2="1" y2="0.3"><stop offset="0" stop-color="#d0d0d0"/><stop offset="0.35" stop-color="#e4e4e4"/><stop offset="0.75" stop-color="#b8b8b8"/><stop offset="1" stop-color="#8a8a8a"/></linearGradient></defs>
<ellipse cx="6.0" cy="11.5" rx="5.5" ry="11.0" fill="url(#sp1079_356)" stroke="#7a7a7a" stroke-width="0.8"/>
<path d="M1.5 11.5 H10.5" stroke="#a8a8a8"/>
<path d="M3.8 8.0 L6.0 3.5 L8.2 8.0" fill="none" stroke="#505050" stroke-width="0.9"/>
<path d="M3.8 15.0 L6.0 19.5 L8.2 15.0" fill="none" stroke="#606060" stroke-width="0.9"/>
</svg>
<div class="ab" style="left:1091px;top:357px;width:53px;height:23px;background:#fffcff;border-style:solid;border-width:4px 4px 4px 3px;border-color:#929292 #c6c6c6 #c9c9c9 #8c8c8c"></div>
<div class="t" style="left:1096px;top:364px;font-size:10.6px">54</div>
<div class="t" style="left:1084px;top:403px;font-size:10.5px">Recipe Step</div>
<svg class="ab" style="left:1079px;top:416px" width="12" height="23" viewBox="0 0 12 23">
<defs><linearGradient id="sp1079_416" x1="0" y1="0" x2="1" y2="0.3"><stop offset="0" stop-color="#d0d0d0"/><stop offset="0.35" stop-color="#e4e4e4"/><stop offset="0.75" stop-color="#b8b8b8"/><stop offset="1" stop-color="#8a8a8a"/></linearGradient></defs>
<ellipse cx="6.0" cy="11.5" rx="5.5" ry="11.0" fill="url(#sp1079_416)" stroke="#7a7a7a" stroke-width="0.8"/>
<path d="M1.5 11.5 H10.5" stroke="#a8a8a8"/>
<path d="M3.8 8.0 L6.0 3.5 L8.2 8.0" fill="none" stroke="#505050" stroke-width="0.9"/>
<path d="M3.8 15.0 L6.0 19.5 L8.2 15.0" fill="none" stroke="#606060" stroke-width="0.9"/>
</svg>
<div class="ab" style="left:1091px;top:417px;width:53px;height:23px;background:#fffcff;border-style:solid;border-width:4px 4px 4px 3px;border-color:#929292 #c6c6c6 #c9c9c9 #8c8c8c"></div>
<div class="t" style="left:1096px;top:424px;font-size:10.6px">12</div>
<svg class="ab" style="left:1161px;top:469px" width="20" height="20" viewBox="0 0 20 20">
<defs><radialGradient id="led1171479" cx="0.38" cy="0.32" r="0.7"><stop offset="0" stop-color="#c8a8a8"/><stop offset="0.45" stop-color="#8a6060"/><stop offset="1" stop-color="#5a3a3a"/></radialGradient></defs>
<circle cx="10.5" cy="10.5" r="8.5" fill="#e6e6e6"/>
<circle cx="9.5" cy="9.5" r="8.5" fill="#9a9a9a"/>
<circle cx="10" cy="10" r="7.5" fill="url(#led1171479)"/>
</svg>
<div class="t" style="left:958px;top:474px;width:199px;text-align:right;font-size:10.6px"><span style="display:inline-block;transform:scaleX(0.93);transform-origin:100% 50%"><span class="u">CAMERA SN ERROR</span></span></div>
<svg class="ab" style="left:1161px;top:498px" width="20" height="20" viewBox="0 0 20 20">
<defs><radialGradient id="led1171508" cx="0.38" cy="0.32" r="0.7"><stop offset="0" stop-color="#c0ffa0"/><stop offset="0.45" stop-color="#40f020"/><stop offset="1" stop-color="#20a010"/></radialGradient></defs>
<circle cx="10.5" cy="10.5" r="8.5" fill="#e6e6e6"/>
<circle cx="9.5" cy="9.5" r="8.5" fill="#9a9a9a"/>
<circle cx="10" cy="10" r="7.5" fill="url(#led1171508)"/>
</svg>
<div class="t" style="left:958px;top:501px;width:199px;text-align:right;font-size:10.6px">Saving Images</div>
<svg class="ab" style="left:1161px;top:525px" width="20" height="20" viewBox="0 0 20 20">
<defs><radialGradient id="led1171535" cx="0.38" cy="0.32" r="0.7"><stop offset="0" stop-color="#c8a8a8"/><stop offset="0.45" stop-color="#8a6060"/><stop offset="1" stop-color="#5a3a3a"/></radialGradient></defs>
<circle cx="10.5" cy="10.5" r="8.5" fill="#e6e6e6"/>
<circle cx="9.5" cy="9.5" r="8.5" fill="#9a9a9a"/>
<circle cx="10" cy="10" r="7.5" fill="url(#led1171535)"/>
</svg>
<div class="t" style="left:958px;top:533px;width:199px;text-align:right;font-size:10.6px"><span class="u">C1 Error</span></div>
<svg class="ab" style="left:1161px;top:553px" width="20" height="20" viewBox="0 0 20 20">
<defs><radialGradient id="led1171563" cx="0.38" cy="0.32" r="0.7"><stop offset="0" stop-color="#c8a8a8"/><stop offset="0.45" stop-color="#8a6060"/><stop offset="1" stop-color="#5a3a3a"/></radialGradient></defs>
<circle cx="10.5" cy="10.5" r="8.5" fill="#e6e6e6"/>
<circle cx="9.5" cy="9.5" r="8.5" fill="#9a9a9a"/>
<circle cx="10" cy="10" r="7.5" fill="url(#led1171563)"/>
</svg>
<div class="t" style="left:958px;top:562px;width:199px;text-align:right;font-size:10.6px"><span class="u">C2 Error</span></div>
<svg class="ab" style="left:1161px;top:606px" width="20" height="20" viewBox="0 0 20 20">
<defs><radialGradient id="led1171616" cx="0.38" cy="0.32" r="0.7"><stop offset="0" stop-color="#c0ffa0"/><stop offset="0.45" stop-color="#40f020"/><stop offset="1" stop-color="#20a010"/></radialGradient></defs>
<circle cx="10.5" cy="10.5" r="8.5" fill="#e6e6e6"/>
<circle cx="9.5" cy="9.5" r="8.5" fill="#9a9a9a"/>
<circle cx="10" cy="10" r="7.5" fill="url(#led1171616)"/>
</svg>
<div class="t" style="left:958px;top:608px;width:199px;text-align:right;font-size:10.6px"><span class="u">Trigger Start</span></div>
<svg class="ab" style="left:1161px;top:630px" width="20" height="20" viewBox="0 0 20 20">
<defs><radialGradient id="led1171640" cx="0.38" cy="0.32" r="0.7"><stop offset="0" stop-color="#4a7a40"/><stop offset="0.45" stop-color="#1e4a14"/><stop offset="1" stop-color="#0e2a08"/></radialGradient></defs>
<circle cx="10.5" cy="10.5" r="8.5" fill="#e6e6e6"/>
<circle cx="9.5" cy="9.5" r="8.5" fill="#9a9a9a"/>
<circle cx="10" cy="10" r="7.5" fill="url(#led1171640)"/>
</svg>
<div class="t" style="left:958px;top:633px;width:199px;text-align:right;font-size:10.6px"><span class="u">Trigger Done</span></div>
<div class="ab" style="left:112px;top:561px;width:264px;height:27px;background:#bcbabe;border-style:solid;border-width:4px 4px 4px 4px;border-color:#929292 #c6c6c6 #c9c9c9 #8c8c8c"></div>
<div class="ab" style="left:125px;top:565px;width:247px;height:19px;background:#d6d4d8"></div>
<div class="ab" style="left:117px;top:567px"><svg width="8" height="11" viewBox="0 0 8 11"><rect x="1.5" y="1.5" width="3" height="3" fill="none" stroke="#000" stroke-width="1"/><rect x="3.5" y="6.5" width="3" height="3" fill="none" stroke="#000" stroke-width="1"/><path d="M2.5 4.5 V6.5 H3.5" stroke="#000" stroke-width="1" fill="none"/></svg></div>
<div class="t" style="left:126px;top:567px;font-size:10.95px">K:\20131023\2013-10-23-10-48-00-C1.FITS</div>
<div class="t" style="left:377px;top:571px;font-size:10.2px">FITS Path Cam1</div>
<div class="ab" style="left:580px;top:561px;width:264px;height:27px;background:#bcbabe;border-style:solid;border-width:4px 4px 4px 4px;border-color:#929292 #c6c6c6 #c9c9c9 #8c8c8c"></div>
<div class="ab" style="left:593px;top:565px;width:247px;height:19px;background:#d6d4d8"></div>
<div class="ab" style="left:585px;top:567px"><svg width="8" height="11" viewBox="0 0 8 11"><rect x="1.5" y="1.5" width="3" height="3" fill="none" stroke="#000" stroke-width="1"/><rect x="3.5" y="6.5" width="3" height="3" fill="none" stroke="#000" stroke-width="1"/><path d="M2.5 4.5 V6.5 H3.5" stroke="#000" stroke-width="1" fill="none"/></svg></div>
<div class="t" style="left:594px;top:567px;font-size:10.95px">K:\20131023\2013-10-23-10-48-00-C2.FITS</div>
<div class="t" style="left:845px;top:576px;font-size:10.2px">FITS Path Cam2</div>
<div class="t" style="left:1060px;top:672px;font-size:10.6px">error IO</div>
<div class="ab" style="left:1060px;top:685px;width:122px;height:119px;background:#aeadb0;border-style:solid;border-width:4px 0 4px 4px;border-color:#8c8c8c #8c8c8c #cfcdd1 #8a8a8a"></div>
<div class="t" style="left:1064px;top:695px;font-size:10.6px">status</div>
<div class="t" style="left:1109px;top:692px;font-size:10.6px">code</div>
<div class="ab" style="left:1071px;top:709px;width:19px;height:19px;background:#d2d0d4;border:2px solid;border-color:#e8e8e8 #7a7a7a #7a7a7a #e8e8e8"></div>
<svg class="ab" style="left:1074px;top:712px" width="13" height="13" viewBox="0 0 13 13"><path d="M1 7 L4.5 11 L12 1.5" fill="none" stroke="#000" stroke-width="3.6"/><path d="M1.3 7 L4.5 10.5 L11.7 1.8" fill="none" stroke="#00e000" stroke-width="2"/></svg>
<svg class="ab" style="left:1098px;top:704px" width="12" height="24" viewBox="0 0 12 24">
<defs><linearGradient id="sp1098_704" x1="0" y1="0" x2="1" y2="0.3"><stop offset="0" stop-color="#d0d0d0"/><stop offset="0.35" stop-color="#e4e4e4"/><stop offset="0.75" stop-color="#b8b8b8"/><stop offset="1" stop-color="#8a8a8a"/></linearGradient></defs>
<ellipse cx="6.0" cy="12.0" rx="5.5" ry="11.5" fill="url(#sp1098_704)" stroke="#7a7a7a" stroke-width="0.8"/>
<path d="M1.5 12.0 H10.5" stroke="#a8a8a8"/>
<path d="M3.8 8.5 L6.0 4.0 L8.2 8.5" fill="none" stroke="#505050" stroke-width="0.9"/>
<path d="M3.8 15.5 L6.0 20.0 L8.2 15.5" fill="none" stroke="#606060" stroke-width="0.9"/>
</svg>
<div class="ab" style="left:1110px;top:706px;width:72px;height:23px;background:#9c9b9e;border-style:solid;border-width:4px 0px 5px 0px;border-color:#8e8e8e #c8c8c8 #c9c7cb #8a8a8a"></div>
<div class="ab" style="left:1119px;top:710px;width:63px;height:14px;background:#fff"></div>
<div class="t" style="left:1110px;top:711px;font-size:10px;color:#c8c8c8">d</div>
<div class="t" style="left:1119px;top:711px;font-size:10.6px">0</div>
<div class="t" style="left:1074px;top:727px;font-size:10.6px">source</div>
<div class="ab" style="left:1064px;top:740px;width:118px;height:60px;background:#fff;border-style:solid;border-width:4px 0px 4px 4px;border-color:#9c9a9e #c8c8c8 #cfcdd1 #9a989c"></div>
<div class="t" style="left:1064px;top:825px;font-size:10.6px">error IO 2</div>
<div class="ab" style="left:1064px;top:838px;width:118px;height:122px;background:#aeadb0;border-style:solid;border-width:4px 0 4px 4px;border-color:#8c8c8c #8c8c8c #cfcdd1 #8a8a8a"></div>
<div class="t" style="left:1067px;top:847px;font-size:10.6px">status</div>
<div class="t" style="left:1104px;top:843px;font-size:10.6px">code</div>
<div class="ab" style="left:1073px;top:861px;width:19px;height:19px;background:#d2d0d4;border:2px solid;border-color:#e8e8e8 #7a7a7a #7a7a7a #e8e8e8"></div>
<svg class="ab" style="left:1076px;top:864px" width="13" height="13" viewBox="0 0 13 13"><path d="M1 7 L4.5 11 L12 1.5" fill="none" stroke="#000" stroke-width="3.6"/><path d="M1.3 7 L4.5 10.5 L11.7 1.8" fill="none" stroke="#00e000" stroke-width="2"/></svg>
<div class="ab" style="left:1104px;top:857px;width:78px;height:23px;background:#9c9b9e;border-style:solid;border-width:4px 0px 5px 4px;border-color:#8e8e8e #c8c8c8 #c9c7cb #8a8a8a"></div>
<div class="ab" style="left:1114px;top:861px;width:68px;height:14px;background:#fff"></div>
<div class="t" style="left:1106px;top:863px;font-size:10px;color:#c8c8c8">d</div>
<div class="t" style="left:1114px;top:863px;font-size:10.6px">0</div>
<div class="t" style="left:1067px;top:871px;font-size:10.6px">source</div>
<div class="ab" style="left:1068px;top:885px;width:114px;height:75px;background:#fff;border-style:solid;border-width:4px 0px 0px 4px;border-color:#9c9a9e #c8c8c8 #cfcdd1 #9a989c"></div>
<div class="t" style="left:848px;top:894px;font-size:18.2px;font-weight:bold;color:rgba(245,15,25,0.63);-webkit-text-stroke:0.6px rgba(245,15,25,0.63);paint-order:stroke fill">CoMP-S printscreen 10-23-13 10:48:14</div>
<div class="ab" style="left:1182px;top:66px;width:16px;height:846px;background-color:#d4d0c8;background-image:linear-gradient(45deg,#fff 25%,transparent 25%,transparent 75%,#fff 75%),linear-gradient(45deg,#fff 25%,transparent 25%,transparent 75%,#fff 75%);background-size:2px 2px;background-position:0 0,1px 1px"></div>
<div class="ab" style="left:1182px;top:66px;width:16px;height:16px;background:#d4d0c8;border-top:1px solid #d4d0c8;border-left:1px solid #d4d0c8;border-right:1px solid #404040;border-bottom:1px solid #404040;box-shadow:inset 1px 1px 0 #fff,inset -1px -1px 0 #808080"></div>
<svg class="ab" style="left:1186px;top:71px" width="8" height="5"><path d="M0 4 L4 0 L8 4 Z" fill="#000"/></svg>
<div class="ab" style="left:1182px;top:82px;width:16px;height:414px;background:#d4d0c8;border-top:1px solid #d4d0c8;border-left:1px solid #d4d0c8;border-right:1px solid #404040;border-bottom:1px solid #404040;box-shadow:inset 1px 1px 0 #fff,inset -1px -1px 0 #808080"></div>
<div class="ab" style="left:1182px;top:896px;width:16px;height:16px;background:#d4d0c8;border-top:1px solid #d4d0c8;border-left:1px solid #d4d0c8;border-right:1px solid #404040;border-bottom:1px solid #404040;box-shadow:inset 1px 1px 0 #fff,inset -1px -1px 0 #808080"></div>
<svg class="ab" style="left:1186px;top:902px" width="8" height="5"><path d="M0 0 L8 0 L4 4 Z" fill="#000"/></svg>
<div class="ab" style="left:2px;top:912px;width:1180px;height:16px;background-color:#d4d0c8;background-image:linear-gradient(45deg,#fff 25%,transparent 25%,transparent 75%,#fff 75%),linear-gradient(45deg,#fff 25%,transparent 25%,transparent 75%,#fff 75%);background-size:2px 2px;background-position:0 0,1px 1px"></div>
<div class="ab" style="left:2px;top:912px;width:16px;height:16px;background:#d4d0c8;border-top:1px solid #d4d0c8;border-left:1px solid #d4d0c8;border-right:1px solid #404040;border-bottom:1px solid #404040;box-shadow:inset 1px 1px 0 #fff,inset -1px -1px 0 #808080"></div>
<svg class="ab" style="left:8px;top:916px" width="5" height="8"><path d="M4 0 L4 8 L0 4 Z" fill="#000"/></svg>
<div class="ab" style="left:18px;top:912px;width:1095px;height:16px;background:#d4d0c8;border-top:1px solid #d4d0c8;border-left:1px solid #d4d0c8;border-right:1px solid #404040;border-bottom:1px solid #404040;box-shadow:inset 1px 1px 0 #fff,inset -1px -1px 0 #808080"></div>
<div class="ab" style="left:1166px;top:912px;width:16px;height:16px;background:#d4d0c8;border-top:1px solid #d4d0c8;border-left:1px solid #d4d0c8;border-right:1px solid #404040;border-bottom:1px solid #404040;box-shadow:inset 1px 1px 0 #fff,inset -1px -1px 0 #808080"></div>
<svg class="ab" style="left:1172px;top:916px" width="5" height="8"><path d="M0 0 L0 8 L4 4 Z" fill="#000"/></svg>
<div class="ab" style="left:1182px;top:912px;width:16px;height:16px;background:#d4d0c8"></div>
<div class="ab" style="left:0px;top:928px;width:1200px;height:1px;background:#404040"></div>
<div class="ab" style="left:0px;top:929px;width:1200px;height:2px;background:#fff"></div>
<div class="ab" style="left:0px;top:931px;width:1200px;height:3px;background:#d4d0c8"></div>
</body></html>
